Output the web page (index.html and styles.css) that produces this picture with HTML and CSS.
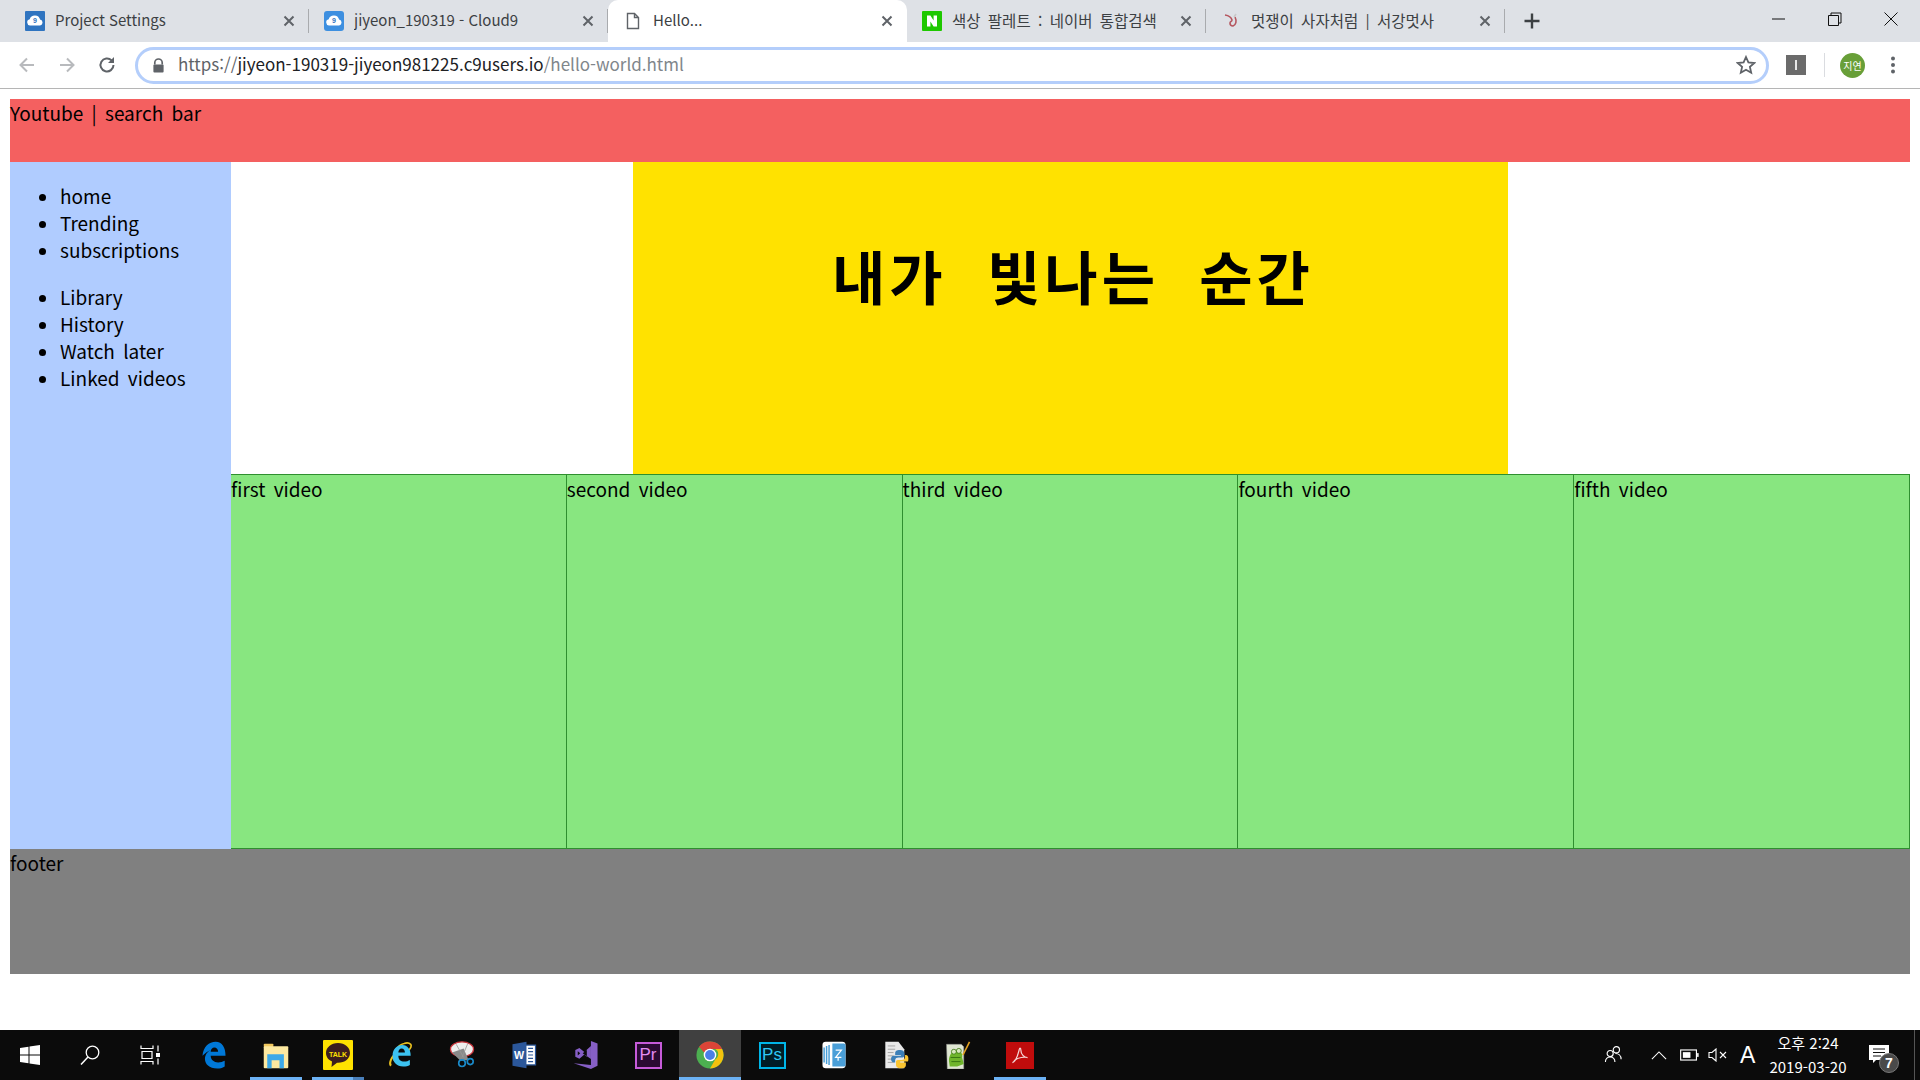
FILE: index.html
```html
<!DOCTYPE html>
<html lang="ko">
<head>
<meta charset="utf-8">
<title>Hello...</title>
<link rel="stylesheet" href="styles.css">
</head>
<body>
<div class="screen">
  <div class="chrome">
    <div class="tabstrip">
      <div class="tab">
        <svg class="fav" viewBox="0 0 20 20"><rect width="20" height="20" rx="1" fill="#2f74c0"/><path d="M5 14.500a3.200 3.200 0 0 1-.3-6.300 5.400 5.400 0 0 1 10.400.4 3 3 0 0 1 0 5.900z" fill="#fff"/><text x="10" y="12" class="fav-nine" text-anchor="middle">9</text></svg>
        <span class="tab-title">Project Settings</span>
        <svg class="tab-x" viewBox="0 0 12 12"><path d="M1.500 1.500l9 9M10.500 1.500l-9 9" stroke="#5f6368" stroke-width="2"/></svg>
      </div>
      <div class="tab tab-sep">
        <svg class="fav" viewBox="0 0 20 20"><rect width="20" height="20" rx="3" fill="#3d8fe0"/><path d="M5 14.500a3.200 3.200 0 0 1-.3-6.300 5.400 5.400 0 0 1 10.400.4 3 3 0 0 1 0 5.900z" fill="#fff"/><text x="10" y="12" class="fav-nine" text-anchor="middle">9</text></svg>
        <span class="tab-title">jiyeon_190319 - Cloud9</span>
        <svg class="tab-x" viewBox="0 0 12 12"><path d="M1.500 1.500l9 9M10.500 1.500l-9 9" stroke="#5f6368" stroke-width="2"/></svg>
      </div>
      <div class="tab tab-active">
        <svg class="fav" viewBox="0 0 20 20"><path d="M4.500 2.500h7l4 4v11h-11z M11.500 2.500v4h4" fill="none" stroke="#5f6368" stroke-width="1.400"/></svg>
        <span class="tab-title">Hello...</span>
        <svg class="tab-x" viewBox="0 0 12 12"><path d="M1.500 1.500l9 9M10.500 1.500l-9 9" stroke="#5f6368" stroke-width="2"/></svg>
      </div>
      <div class="tab tab-sep">
        <svg class="fav" viewBox="0 0 20 20"><rect width="20" height="20" rx="1" fill="#1ec800"/><path d="M5 4.500h3.400l3.200 5v-5H15v11h-3.400l-3.200-5v5H5z" fill="#fff"/></svg>
        <span class="tab-title tab-title-ko">색상 팔레트 : 네이버 통합검색</span>
        <svg class="tab-x" viewBox="0 0 12 12"><path d="M1.500 1.500l9 9M10.500 1.500l-9 9" stroke="#5f6368" stroke-width="2"/></svg>
      </div>
      <div class="tab tab-sep">
        <svg class="fav" viewBox="0 0 20 20"><path d="M4 4c3 .5 6 1.500 7 5 0 2-2 1-2 3s1 3 3 3c3-1 4-5 2-9" fill="none" stroke="#b5565f" stroke-width="1.600"/><path d="M15 3l-2 3" stroke="#c9c9c9" stroke-width="1.600"/></svg>
        <span class="tab-title tab-title-ko">멋쟁이 사자처럼 | 서강멋사</span>
        <svg class="tab-x" viewBox="0 0 12 12"><path d="M1.500 1.500l9 9M10.500 1.500l-9 9" stroke="#5f6368" stroke-width="2"/></svg>
      </div>
      <div class="tab-plus">
        <svg viewBox="0 0 16 16"><path d="M8 .5v15M.5 8h15" stroke="#3c4043" stroke-width="2.400"/></svg>
      </div>
      <div class="window-controls">
        <svg viewBox="0 0 16 16"><path d="M1 8h13" stroke="#111" stroke-width="1"/></svg>
        <svg viewBox="0 0 16 16"><path d="M1.500 4.500h10v10h-10z M4 4.500V2h10v10h-2.500" fill="none" stroke="#111" stroke-width="1"/></svg>
        <svg viewBox="0 0 16 16"><path d="M1.500 1.500l13 13M14.500 1.500l-13 13" stroke="#111" stroke-width="1"/></svg>
      </div>
    </div>
    <div class="toolbar">
      <svg class="nav-icon" viewBox="0 0 20 20"><path d="M17 10H4M10 3.500L3.500 10l6.500 6.500" fill="none" stroke="#b8babd" stroke-width="2"/></svg>
      <svg class="nav-icon" viewBox="0 0 20 20"><path d="M3 10h13M10 3.500l6.500 6.500-6.500 6.500" fill="none" stroke="#b8babd" stroke-width="2"/></svg>
      <svg class="nav-icon" viewBox="0 0 20 20"><path d="M16.500 10a6.500 6.500 0 1 1-1.900-4.600" fill="none" stroke="#5f6368" stroke-width="2"/><path d="M17 2v6h-6z" fill="#5f6368"/></svg>
      <div class="omnibox">
        <svg class="lock" viewBox="0 0 14 16"><path d="M3 7V5a4 4 0 0 1 8 0v2" fill="none" stroke="#5f6368" stroke-width="1.800"/><rect x="1.500" y="7" width="11" height="8.500" rx="1" fill="#5f6368"/></svg>
        <span class="url"><span class="url-dim">https://</span><span class="url-host">jiyeon-190319-jiyeon981225.c9users.io</span><span class="url-path">/hello-world.html</span></span>
        <svg class="star" viewBox="0 0 20 20"><path d="M10 2l2.400 5.400 5.900.6-4.400 3.900 1.300 5.800L10 14.700l-5.200 3 1.300-5.800L1.700 8l5.900-.6z" fill="none" stroke="#5f6368" stroke-width="1.800"/></svg>
      </div>
      <div class="ext"><span class="ext-bar"></span></div>
      <span class="toolbar-sep"></span>
      <div class="avatar">지연</div>
      <svg class="kebab" viewBox="0 0 6 20"><circle cx="3" cy="3.500" r="2" fill="#5f6368"/><circle cx="3" cy="10" r="2" fill="#5f6368"/><circle cx="3" cy="16.500" r="2" fill="#5f6368"/></svg>
    </div>
  </div>

  <main class="page">
    <header class="site-header">Youtube | search bar</header>
    <div class="site-body">
      <nav class="sidebar">
        <ul class="menu">
          <li>home</li>
          <li>Trending</li>
          <li>subscriptions</li>
        </ul>
        <ul class="menu">
          <li>Library</li>
          <li>History</li>
          <li>Watch later</li>
          <li>Linked videos</li>
        </ul>
      </nav>
      <div class="content">
        <div class="banner-row">
          <div class="banner"><h1 class="banner-title">내가 빛나는 순간</h1></div>
        </div>
        <div class="videos">
          <div class="video">first video</div>
          <div class="video">second video</div>
          <div class="video">third video</div>
          <div class="video">fourth video</div>
          <div class="video">fifth video</div>
        </div>
      </div>
    </div>
    <footer class="site-footer">footer</footer>
  </main>

  <div class="taskbar">
    <div class="sys-slot">
      <svg class="sys-icon" viewBox="0 0 20 20"><path d="M0 3l8.500-1.200V9.500H0zM9.500 1.600L20 0v9.500H9.500zM0 10.500h8.500v7.700L0 17zM9.500 10.500H20V20L9.500 18.400z" fill="#fff"/></svg>
    </div>
    <div class="sys-slot">
      <svg class="sys-icon" viewBox="0 0 20 20"><circle cx="12.500" cy="7.500" r="6.300" fill="none" stroke="#fff" stroke-width="1.300"/><path d="M8 12L1 19.500" stroke="#fff" stroke-width="1.500"/></svg>
    </div>
    <div class="sys-slot">
      <svg class="sys-icon" viewBox="0 0 20 20"><path d="M1 .5v3h12v-3M2 6.500h10v7H2zM1 19.500v-3h12v3M18 .5v6M18 13.500v6" fill="none" stroke="#fff" stroke-width="1.200"/><rect x="16" y="8" width="4" height="4" fill="#fff"/></svg>
    </div>
    <div class="app">
      <svg class="app-icon" viewBox="0 0 30 34"><path d="M1 18C2 7 9 1 17 1c8 0 12 7 12 17H11c0 5 4 8 9 8 3 0 6-1 8-2v7c-3 2-6 2.500-9 2.500C9 33.500 4 28 4 22c0-5 3-9 7-11-3 1-7 4-10 7zM11 13h9c0-3-2-5-4.500-5S11 10 11 13z" fill="#0078d7"/></svg>
    </div>
    <div class="app app-open">
      <svg class="app-icon" viewBox="0 0 30 32"><rect x="1" y="3" width="11" height="4" rx="1" fill="#f0c75e"/><rect x="1" y="6" width="28" height="25" rx="1" fill="#fde9a0"/><path d="M5 31V15h19v16h-5V22h-9v9z" fill="#3da9e8"/></svg>
    </div>
    <div class="app app-open app-open-split">
      <div class="kakao"><svg class="kakao-bubble" viewBox="0 0 26 26"><path d="M13 1C6 1 1 5.500 1 11c0 4 2.500 7 6 8.500L6.500 25l5.500-4.200h1c7 0 12-4.300 12-9.800S20 1 13 1z" fill="#3c1e1e"/><text x="13" y="14.500" class="kakao-text" text-anchor="middle">TALK</text></svg></div>
    </div>
    <div class="app">
      <svg class="app-icon" viewBox="0 0 30 34"><path d="M8 24c-1-9 3-19 12-21 3-1 6-1 8 1 2 3-1 6-3 8" fill="none" stroke="#e8c020" stroke-width="2"/><path d="M4 30c-3-3 1-10 4-13" fill="none" stroke="#e8c020" stroke-width="2.400"/><path d="M6 18c0-8 5-13 12-13 6 0 10 5 10 13H13c0 5 3 7 7 7 3 0 5-1 7-2v6c-2 1.500-5 2-8 2-8 0-13-5-13-13zM13 14h8c0-3-1.500-5-4-5s-4 2-4 5z" fill="#3cc2f0"/></svg>
    </div>
    <div class="app">
      <svg class="app-icon" viewBox="0 0 30 34"><ellipse cx="15" cy="10" rx="14" ry="9" fill="#eee" stroke="#c8333a" stroke-width="1.500"/><path d="M3 14l10 10 10-1-6-14" fill="#8a8a8a"/><path d="M8 4l9 16M22 3l-7 17" stroke="#999" stroke-width="1"/><circle cx="15" cy="27" r="4" fill="none" stroke="#1a8ac9" stroke-width="2"/><circle cx="25" cy="25" r="3.600" fill="none" stroke="#1a8ac9" stroke-width="2"/></svg>
    </div>
    <div class="app">
      <svg class="app-icon" viewBox="0 0 30 34"><rect x="14" y="5" width="15" height="24" fill="#fff" stroke="#2b579a" stroke-width="1.500"/><path d="M1 4l17-3v32L1 30z" fill="#2b579a"/><path d="M20 9h6M20 13h6M20 17h6M20 21h6M20 25h6" stroke="#2b579a" stroke-width="1.500"/><text x="9" y="22" class="word-text" text-anchor="middle">W</text></svg>
    </div>
    <div class="app">
      <svg class="app-icon" viewBox="0 0 30 34"><path d="M21 0l8 3v27l-8 4L0 27l21 2z" fill="#865fc5"/><path d="M21 6v16l-8-5.500-6 5L2 19V11l5-2.500 6 5zM5 12.500v5l3-2.500zM11 15l5 4v-8z" fill="#865fc5" fill-rule="evenodd"/></svg>
    </div>
    <div class="app">
      <div class="adobe adobe-pr">Pr</div>
    </div>
    <div class="app app-active">
      <svg class="app-icon" viewBox="0 0 32 32"><circle cx="16" cy="16" r="15.500" fill="#4caf50"/><path d="M16 .5A15.500 15.500 0 0 1 29.800 9H16a7 7 0 0 0-6.500 4.500L3.500 6.500A15.500 15.500 0 0 1 16 .5z" fill="#dc4437"/><path d="M29.800 9A15.500 15.500 0 0 1 16 31.500L22 21a7 7 0 0 0 0-12z" fill="#f4c20d"/><circle cx="16" cy="16" r="7.200" fill="#fff"/><circle cx="16" cy="16" r="5.600" fill="#4a7fe8"/></svg>
    </div>
    <div class="app">
      <div class="adobe adobe-ps">Ps</div>
    </div>
    <div class="app">
      <svg class="app-icon" viewBox="0 0 30 34"><rect x="1" y="1" width="28" height="32" rx="4" fill="#fff"/><path d="M13 3h14a2 2 0 0 1 2 2v24a2 2 0 0 1-2 2H13z" fill="#4a9fd8"/><path d="M3 8v18M6 6v22M9 5v24" stroke="#4a9fd8" stroke-width="1.800"/><path d="M17 11h7l-7 9h7M20 24v-5" fill="none" stroke="#fff" stroke-width="1.500"/></svg>
    </div>
    <div class="app">
      <svg class="app-icon" viewBox="0 0 30 34"><path d="M2 1h16l7 9v23H2z" fill="#e9e9e9"/><path d="M5 6h9M5 10h9M5 14h7M5 18h7M5 22h7M5 26h7" stroke="#999" stroke-width="1"/><path d="M20 11c-5 0-6 2-6 4v2h7v1h-9c-2 0-3 2-3 4s1 4 3 4h2v-3c0-2 2-3 4-3h5c1 0 2-1 2-2v-3c0-3-2-4-5-4z" fill="#3b7fb8"/><path d="M21 33c5 0 6-2 6-4v-3h-7v-1h9c1 0 1-2 1-4s-1-4-3-4h-1v3c0 2-2 3-4 3h-5c-1 0-2 1-2 2v4c0 3 3 4 6 4z" fill="#fbc531"/></svg>
    </div>
    <div class="app">
      <svg class="app-icon" viewBox="0 0 30 34"><path d="M1 4h18l3 3v27H2z" fill="#dfe6d2" stroke="#888" stroke-width=".6"/><path d="M4 24c0-8 5-13 10-12 5 0 7 4 6 8l2 8-8 3H5z" fill="#6fb52c"/><circle cx="10" cy="13" r="3" fill="#d9e8c0" stroke="#3d7a12"/><circle cx="16" cy="12" r="3" fill="#d9e8c0" stroke="#3d7a12"/><path d="M6 20h12M7 25h11" stroke="#2f6a0d"/><path d="M21 17L29 1" stroke="#e0a020" stroke-width="2"/></svg>
    </div>
    <div class="app app-open">
      <div class="acrobat"><svg class="acrobat-mark" viewBox="0 0 24 24"><path d="M3 21c3-1 6-7 8-15 .5-3 2-3 2 0 0 5 4 9 8 9-4-1-11 0-15 3-1 1-2 3-3 3z" fill="none" stroke="#f4d5d5" stroke-width="1.500"/></svg></div>
    </div>
    <div class="tray">
      <svg class="tray-people" viewBox="0 0 20 20"><circle cx="13" cy="5" r="3.300" fill="none" stroke="#fff" stroke-width="1.200"/><circle cx="6.500" cy="9" r="3.200" fill="none" stroke="#fff" stroke-width="1.200"/><path d="M1.500 18c0-3 2-5.500 5-5.500s5 2.500 5 5.500M12 9c3 0 6 2 6 6" fill="none" stroke="#fff" stroke-width="1.200"/></svg>
      <svg class="tray-chevron" viewBox="0 0 18 10"><path d="M1 9l8-8 8 8" fill="none" stroke="#fff" stroke-width="1.200"/></svg>
      <svg class="tray-battery" viewBox="0 0 20 12"><rect x=".7" y=".7" width="16.600" height="10.600" fill="none" stroke="#fff" stroke-width="1.200"/><rect x="3" y="3" width="8" height="6" fill="#fff"/><rect x="18" y="4" width="1.600" height="4" fill="#fff"/></svg>
      <svg class="tray-speaker" viewBox="0 0 20 14"><path d="M1 4.500h3L8 1v12L4 9.500H1z" fill="none" stroke="#fff" stroke-width="1.100"/><path d="M12 4l6 6M18 4l-6 6" stroke="#fff" stroke-width="1.100"/></svg>
      <span class="tray-ime">A</span>
      <div class="clock"><span>오후 2:24</span><span>2019-03-20</span></div>
      <div class="notify">
        <svg class="notify-icon" viewBox="0 0 20 18"><path d="M0 0h20v15H7l-3 3v-3H0z" fill="#fff"/><path d="M4 4h12M4 7.500h12M4 11h8" stroke="#111" stroke-width="1"/></svg>
        <span class="notify-badge">7</span>
      </div>
      <span class="show-desktop"></span>
    </div>
  </div>
</div>
</body>
</html>
```
FILE: styles.css
```css
* { box-sizing: border-box; }
html, body { margin: 0; padding: 0; }
body { background: #fff; color: #000; font-family: "Noto Sans CJK KR", "Noto Sans", sans-serif; }
.screen { width: 1920px; height: 1080px; display: flex; flex-direction: column; overflow: hidden; }

/* browser */
.chrome { height: 89px; flex: none; border-bottom: 1px solid #b5b5b5; }
.tabstrip { height: 42px; background: #dee1e6; display: flex; align-items: stretch; padding-left: 10px; }
.tab { width: 299px; display: flex; align-items: center; padding: 0 14px 0 15px; position: relative; }
.tab-sep::after, .tab:first-child::after { content: ""; position: absolute; right: 0; top: 9px; height: 24px; width: 1px; background: #a9abae; }
.tab-active { background: #fff; border-radius: 10px 10px 0 0; }
.fav { width: 20px; height: 20px; flex: none; margin-right: 10px; }
.fav-nine { font-family: "Liberation Sans", sans-serif; font-size: 7px; font-weight: 700; fill: #2f74c0; }
.tab-title { flex: 1; font-size: 15px; line-height: 20px; margin-top: -3px; color: #3c4043; white-space: nowrap; overflow: hidden; }
.tab-title-ko { font-size: 15.500px; word-spacing: 3px; }
.tab-x { width: 12px; height: 12px; flex: none; }
.tab-plus { width: 54px; display: flex; align-items: center; justify-content: center; }
.tab-plus svg { width: 16px; height: 16px; }
.window-controls { margin-left: auto; display: flex; align-items: center; gap: 40px; padding-right: 21px; padding-bottom: 4px; }
.window-controls svg { width: 16px; height: 16px; }

.toolbar { height: 46px; display: flex; align-items: center; padding: 0 0 0 17px; background: #fff; }
.nav-icon { width: 20px; height: 20px; flex: none; margin-right: 20px; }
.omnibox { width: 1634px; height: 37px; margin-left: -2px; border: 3px solid #b4cefb; border-radius: 19px; display: flex; align-items: center; padding: 0 10px 0 14px; background: #fff; }
.lock { width: 13px; height: 15px; flex: none; }
.url { margin-left: 13px; flex: 1; font-size: 17px; line-height: 24px; margin-top: -2px; white-space: nowrap; }
.url-dim { color: #5f6368; }
.url-host { color: #202124; }
.url-path { color: #80868b; }
.star { width: 20px; height: 20px; flex: none; }
.ext { width: 20px; height: 20px; flex: none; margin-left: 17px; background: #6b6b6b; display: flex; align-items: center; justify-content: center; }
.ext-bar { width: 2px; height: 10px; background: #e8e8e8; }
.toolbar-sep { width: 1px; height: 24px; background: #dadce0; margin-left: 18px; }
.avatar { width: 25px; height: 25px; border-radius: 50%; background: #689f38; color: #fff; margin-left: 15px; font-size: 10px; display: flex; align-items: center; justify-content: center; }
.kebab { width: 6px; height: 20px; margin-left: 25px; flex: none; }

/* page */
.page { flex: 1; padding: 10px 10px 0; font-size: 19px; line-height: 27px; word-spacing: 3px; }
.site-header { height: 63px; background: #f46060; }
.site-body { display: flex; height: 687px; }
.sidebar { width: 221px; flex: none; background: #b0ccff; }
.menu { margin: 20px 0; padding: 0 0 0 50px; }
.content { flex: 1; display: flex; flex-direction: column; min-width: 0; }
.banner-row { height: 312px; display: flex; justify-content: center; }
.banner { width: 875px; background: #ffe200; display: flex; justify-content: center; padding: 71px 0 0 5px; }
.banner-title { margin: 0; font-weight: 700; font-size: 58px; line-height: 84px; word-spacing: 20px; letter-spacing: 4px; }
.videos { flex: 1; display: grid; grid-template-columns: repeat(5, 1fr); }
.video { background: #88e680; border: 1px solid #2f8f2f; border-left-width: 0; white-space: nowrap; }
.site-footer { height: 125px; background: #808080; }

/* taskbar */
.taskbar { height: 50px; flex: none; background: #0b0b0b; display: flex; align-items: stretch; color: #fff; }
.sys-slot { width: 60px; display: flex; align-items: center; justify-content: center; }
.sys-slot:nth-child(3) { margin-right: 3px; }
.sys-icon { width: 20px; height: 20px; }
.app { width: 62px; flex: none; display: flex; align-items: center; justify-content: center; position: relative; }
.app-icon { width: 28px; height: 28px; }
.app-open::after { content: ""; position: absolute; left: 5px; right: 5px; bottom: 0; height: 3px; background: #6cb2f5; }
.app-open-split::before { content: ""; position: absolute; right: 5px; bottom: 0; width: 11px; height: 3px; background: #4a80bb; z-index: 1; }
.app-active { background: #404040; }
.app-active::after { content: ""; position: absolute; left: 0; right: 0; bottom: 0; height: 3px; background: #6cb2f5; }
.kakao { width: 30px; height: 30px; background: #ffe200; border-radius: 1px; display: flex; align-items: center; justify-content: center; }
.kakao-bubble { width: 26px; height: 26px; }
.kakao-text { font-family: "Liberation Sans", sans-serif; font-size: 7px; font-weight: 700; fill: #ffe200; }
.word-text { font-family: "Liberation Sans", sans-serif; font-size: 13px; font-weight: 700; fill: #fff; }
.adobe { width: 27px; height: 27px; display: flex; align-items: center; justify-content: center; font-family: "Liberation Sans", sans-serif; font-size: 17px; border-width: 2px; border-style: solid; }
.adobe-pr { background: #2a0a33; border-color: #c65bd9; color: #e38cf2; }
.adobe-ps { background: #001d26; border-color: #00b6e8; color: #2fc8f5; }
.acrobat { width: 28px; height: 27px; background: #c00c0c; display: flex; align-items: center; justify-content: center; }
.acrobat-mark { width: 20px; height: 20px; }

.tray { margin-left: auto; display: flex; align-items: center; position: relative; height: 100%; width: 320px; }
.tray-people { width: 19px; height: 19px; position: absolute; left: 4px; top: 15px; }
.tray-chevron { width: 16px; height: 9px; position: absolute; left: 51px; top: 21px; }
.tray-battery { width: 19px; height: 12px; position: absolute; left: 80px; top: 19px; }
.tray-speaker { width: 20px; height: 14px; position: absolute; left: 108px; top: 18px; }
.tray-ime { position: absolute; left: 140px; top: 12px; font-family: "Liberation Sans", sans-serif; font-size: 23px; line-height: 26px; }
.clock { position: absolute; left: 168px; top: 1px; width: 80px; display: flex; flex-direction: column; align-items: center; font-size: 15px; line-height: 24px; white-space: nowrap; }
.notify { position: absolute; left: 269px; top: 15px; width: 30px; height: 30px; }
.notify-icon { width: 20px; height: 18px; display: block; }
.notify-badge { position: absolute; left: 10px; top: 8px; width: 20px; height: 20px; border-radius: 50%; background: #4a4a4a; border: 1px solid #777; color: #fff; font-family: "Liberation Sans", sans-serif; font-weight: 700; font-size: 14px; line-height: 18px; text-align: center; }
.show-desktop { position: absolute; right: 5px; top: 0; bottom: 0; width: 1px; background: #555; }
```
